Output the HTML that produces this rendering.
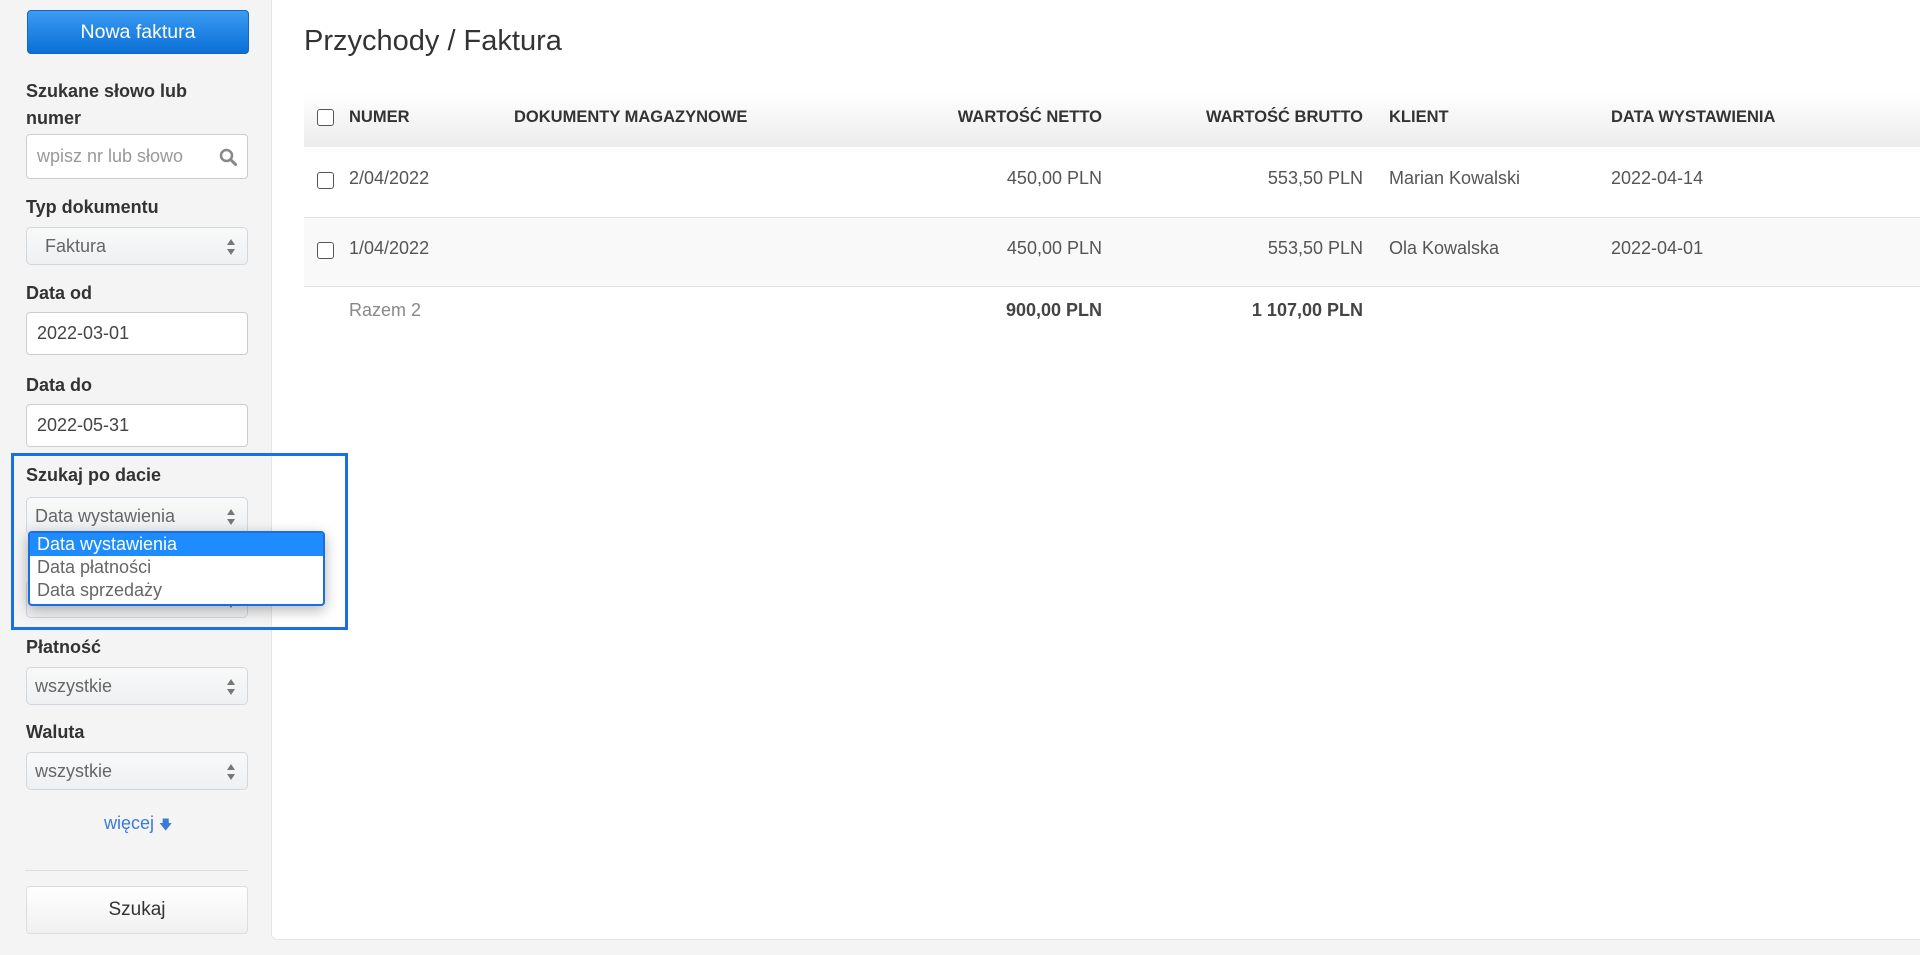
<!DOCTYPE html>
<html><head><meta charset="utf-8"><style>
*{box-sizing:border-box;margin:0;padding:0}
body{width:1920px;height:955px;background:#f4f4f4;font-family:"Liberation Sans",Arial,sans-serif;position:relative;overflow:hidden;color:#333}
.abs{position:absolute}
.btnp{left:27px;top:10px;width:222px;height:44px;border-radius:4px;background:linear-gradient(#3b9cf3,#0a6fd6);border:1px solid #1466c0;color:#fff;font-size:19.5px;text-align:center;line-height:42px}
.lbl{left:26px;font-size:18px;font-weight:bold;color:#333}
.inp{left:26px;width:222px;background:#fff;border:1px solid #ccc;border-radius:4px;font-size:18px;color:#444;padding-left:10px}
.sel{left:26px;width:222px;height:38px;background:linear-gradient(#f9f9f9,#eef0f2);border:1px solid #d0d7df;border-radius:5px;font-size:18px;color:#666;padding-left:8px;line-height:36px}
.arr{position:absolute;right:12px;top:11px;width:8px;height:16px}
.arr:before{content:"";position:absolute;left:0;top:0;border-left:4px solid transparent;border-right:4px solid transparent;border-bottom:6px solid #777}
.arr:after{content:"";position:absolute;left:0;bottom:0;border-left:4px solid transparent;border-right:4px solid transparent;border-top:6px solid #777}
.main{left:271px;top:0;width:1649px;height:940px;background:#fff;border-left:1px solid #e2e6ea;border-bottom:1px solid #e2e6ea;border-radius:0 0 0 6px}
.cb{width:17px;height:17px;border:1.5px solid #555;border-radius:3px;background:#fff}
.th{font-size:16.5px;font-weight:bold;color:#333;top:108px}
.td{font-size:18px;color:#555}
</style></head><body>
<div class="abs main"></div>
<div class="abs btnp">Nowa faktura</div>
<div class="abs lbl" style="top:78px;line-height:27px">Szukane słowo lub<br>numer</div>
<div class="abs inp" style="top:134px;height:45px;line-height:43px;color:#999">wpisz nr lub słowo
<svg style="position:absolute;right:10px;top:13px" width="18" height="18" viewBox="0 0 18 18"><circle cx="7.5" cy="7.5" r="5.5" fill="none" stroke="#888" stroke-width="2.5"/><path d="M11.5 11.5l5 5" stroke="#888" stroke-width="3" stroke-linecap="round"/></svg></div>
<div class="abs lbl" style="top:197px">Typ dokumentu</div>
<div class="abs sel" style="top:227px">&nbsp;&nbsp;Faktura<span class="arr"></span></div>
<div class="abs lbl" style="top:283px">Data od</div>
<div class="abs inp" style="top:312px;height:43px;line-height:41px">2022-03-01</div>
<div class="abs lbl" style="top:375px">Data do</div>
<div class="abs inp" style="top:404px;height:43px;line-height:41px">2022-05-31</div>
<div class="abs lbl" style="top:465px">Szukaj po dacie</div>
<div class="abs sel" style="top:497px">Data wystawienia<span class="arr"></span></div>
<div class="abs sel" style="top:580px">&nbsp;<span class="arr"></span></div>
<div class="abs" style="left:28px;top:531px;width:297px;height:75px;background:#fff;border:2px solid #1a6fe0;border-radius:4px;box-shadow:0 4px 14px rgba(0,0,0,.3);font-size:18px;color:#666;line-height:23px">
<div style="background:#1e8cff;color:#fff;padding-left:7px">Data wystawienia</div>
<div style="padding-left:7px">Data płatności</div>
<div style="padding-left:7px">Data sprzedaży</div></div>
<div class="abs" style="left:11px;top:453px;width:337px;height:177px;border:3px solid #1a6fe8"></div>
<div class="abs lbl" style="top:637px">Płatność</div>
<div class="abs sel" style="top:667px">wszystkie<span class="arr"></span></div>
<div class="abs lbl" style="top:722px">Waluta</div>
<div class="abs sel" style="top:752px">wszystkie<span class="arr"></span></div>
<div class="abs" style="left:104px;top:813px;font-size:18px;color:#3a7bd5">więcej <span style="font-size:13px">&#129095;</span></div>
<div class="abs" style="left:25px;top:870px;width:223px;border-top:1px solid #ddd"></div>
<div class="abs" style="left:26px;top:886px;width:222px;height:48px;background:linear-gradient(#fff,#f0f0f0);border:1px solid #ddd;border-radius:4px;text-align:center;line-height:46px;font-size:19px;color:#333">Szukaj</div>

<div class="abs" style="left:304px;top:25px;font-size:29px;color:#333">Przychody / Faktura</div>
<div class="abs" style="left:304px;top:92px;width:1616px;height:55px;background:linear-gradient(#fff,#ececec)"></div>
<div class="abs" style="left:304px;top:217px;width:1616px;height:70px;background:#f9f9f9;border-top:1px solid #e0e0e0;border-bottom:1px solid #e0e0e0"></div>
<div class="abs cb" style="left:317px;top:109px"></div>
<div class="abs th" style="left:349px">NUMER</div>
<div class="abs th" style="left:514px">DOKUMENTY MAGAZYNOWE</div>
<div class="abs th" style="right:818px">WARTOŚĆ NETTO</div>
<div class="abs th" style="right:557px">WARTOŚĆ BRUTTO</div>
<div class="abs th" style="left:1389px">KLIENT</div>
<div class="abs th" style="left:1611px">DATA WYSTAWIENIA</div>
<div class="abs cb" style="left:317px;top:172px"></div>
<div class="abs td" style="left:349px;top:168px">2/04/2022</div>
<div class="abs td" style="right:818px;top:168px">450,00 PLN</div>
<div class="abs td" style="right:557px;top:168px">553,50 PLN</div>
<div class="abs td" style="left:1389px;top:168px">Marian Kowalski</div>
<div class="abs td" style="left:1611px;top:168px">2022-04-14</div>
<div class="abs cb" style="left:317px;top:242px"></div>
<div class="abs td" style="left:349px;top:238px">1/04/2022</div>
<div class="abs td" style="right:818px;top:238px">450,00 PLN</div>
<div class="abs td" style="right:557px;top:238px">553,50 PLN</div>
<div class="abs td" style="left:1389px;top:238px">Ola Kowalska</div>
<div class="abs td" style="left:1611px;top:238px">2022-04-01</div>
<div class="abs td" style="left:349px;top:300px;color:#888">Razem 2</div>
<div class="abs td" style="right:818px;top:300px;font-weight:bold;color:#444">900,00 PLN</div>
<div class="abs td" style="right:557px;top:300px;font-weight:bold;color:#444">1 107,00 PLN</div>
</body></html>
